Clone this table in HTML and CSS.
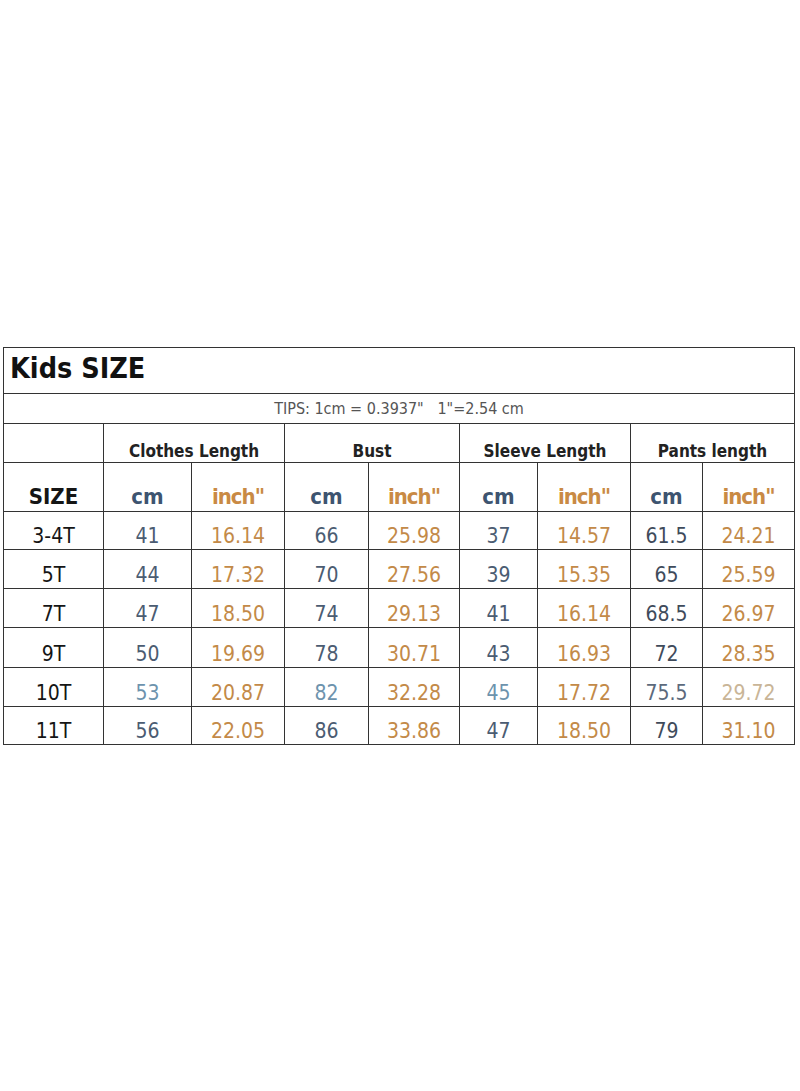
FILE: index.html
```html
<!DOCTYPE html>
<html>
<head>
<meta charset="utf-8">
<link rel="stylesheet" href="styles.css">
</head>
<body>
<div class="wrap">
<table class="size-table">
  <colgroup>
    <col class="c-size"><col class="c1"><col class="c2"><col class="c3"><col class="c4"><col class="c5"><col class="c6"><col class="c7"><col class="c8">
  </colgroup>
  <tr class="r-title"><td colspan="9" class="title">Kids SIZE</td></tr>
  <tr class="r-tips"><td colspan="9" class="tips">TIPS: 1cm = 0.3937"   1"=2.54 cm</td></tr>
  <tr class="r-h1">
    <td></td>
    <td colspan="2" class="grp">Clothes Length</td>
    <td colspan="2" class="grp">Bust</td>
    <td colspan="2" class="grp">Sleeve Length</td>
    <td colspan="2" class="grp">Pants length</td>
  </tr>
  <tr class="r-h2">
    <td class="hsize">SIZE</td>
    <td class="hcm">cm</td><td class="hin">inch"</td>
    <td class="hcm">cm</td><td class="hin">inch"</td>
    <td class="hcm">cm</td><td class="hin">inch"</td>
    <td class="hcm">cm</td><td class="hin">inch"</td>
  </tr>
  <tr class="r-d r1"><td class="sz">3-4T</td><td class="cm">41</td><td class="in">16.14</td><td class="cm">66</td><td class="in">25.98</td><td class="cm">37</td><td class="in">14.57</td><td class="cm dk">61.5</td><td class="in">24.21</td></tr>
  <tr class="r-d r2"><td class="sz">5T</td><td class="cm">44</td><td class="in">17.32</td><td class="cm">70</td><td class="in">27.56</td><td class="cm">39</td><td class="in">15.35</td><td class="cm dk">65</td><td class="in">25.59</td></tr>
  <tr class="r-d r3"><td class="sz">7T</td><td class="cm">47</td><td class="in">18.50</td><td class="cm">74</td><td class="in">29.13</td><td class="cm">41</td><td class="in">16.14</td><td class="cm dk">68.5</td><td class="in">26.97</td></tr>
  <tr class="r-d r4"><td class="sz">9T</td><td class="cm">50</td><td class="in">19.69</td><td class="cm">78</td><td class="in">30.71</td><td class="cm">43</td><td class="in">16.93</td><td class="cm dk">72</td><td class="in">28.35</td></tr>
  <tr class="r-d r5"><td class="sz">10T</td><td class="cm lt">53</td><td class="in">20.87</td><td class="cm lt">82</td><td class="in">32.28</td><td class="cm lt">45</td><td class="in">17.72</td><td class="cm md">75.5</td><td class="in faded">29.72</td></tr>
  <tr class="r-d r6"><td class="sz">11T</td><td class="cm">56</td><td class="in">22.05</td><td class="cm">86</td><td class="in">33.86</td><td class="cm">47</td><td class="in">18.50</td><td class="cm dk">79</td><td class="in">31.10</td></tr>
</table>
</div>
</body>
</html>
```
FILE: styles.css
```css
html, body {
  margin: 0;
  padding: 0;
  background: #fff;
}
body {
  font-family: "DejaVu Sans Condensed", "DejaVu Sans", sans-serif;
  font-stretch: condensed;
}
.wrap {
  padding: 347px 0 0 3px;
  width: 797px;
}
.size-table {
  border-collapse: collapse;
  table-layout: fixed;
  width: 792px;
}
.size-table td {
  border: 1px solid #333;
  padding: 0;
  text-align: center;
  white-space: pre;
}
.c-size { width: 100px; }
.c1 { width: 88px; }
.c2 { width: 93px; }
.c3 { width: 84px; }
.c4 { width: 91px; }
.c5 { width: 78px; }
.c6 { width: 93px; }
.c7 { width: 72px; }
.c8 { width: 92px; }

.r-title { height: 46px; }
.title {
  text-align: left !important;
  font-weight: bold;
  font-size: 28.5px;
  color: #111;
  padding: 0 0 4px 6px !important;
  vertical-align: middle;
}
.r-tips { height: 30px; }
.tips {
  font-size: 16px;
  color: #555;
  vertical-align: middle;
}
.r-h1 { height: 39px; }
.grp {
  font-weight: bold;
  font-size: 17px;
  color: #222;
  vertical-align: bottom;
  padding-bottom: 0 !important;
  line-height: 22px;
}
.r-h2 { height: 49px; }
.r-h2 td {
  vertical-align: bottom;
  font-weight: bold;
  font-size: 22px;
  line-height: 26px;
  padding-bottom: 1px;
}
.hsize { color: #151515; }
.hcm { color: #3d5470; }
.hin { color: #c98a44; letter-spacing: -1px; }

.r-d { height: 39px; }
.r1 { height: 38px; }
.r4 { height: 40px; }
.r6 { height: 38px; }
.r-d td {
  vertical-align: bottom;
  font-size: 21px;
  line-height: 24px;
  padding-bottom: 1px;
}
.sz { color: #151515; }
.cm { color: #4b5c72; }
.cm.dk { color: #3f4b5b; }
.cm.lt { color: #6d93ad; }
.cm.md { color: #5c6a7c; }
.in { color: #c38a48; }
.in.faded { color: #c9b597; }
```
